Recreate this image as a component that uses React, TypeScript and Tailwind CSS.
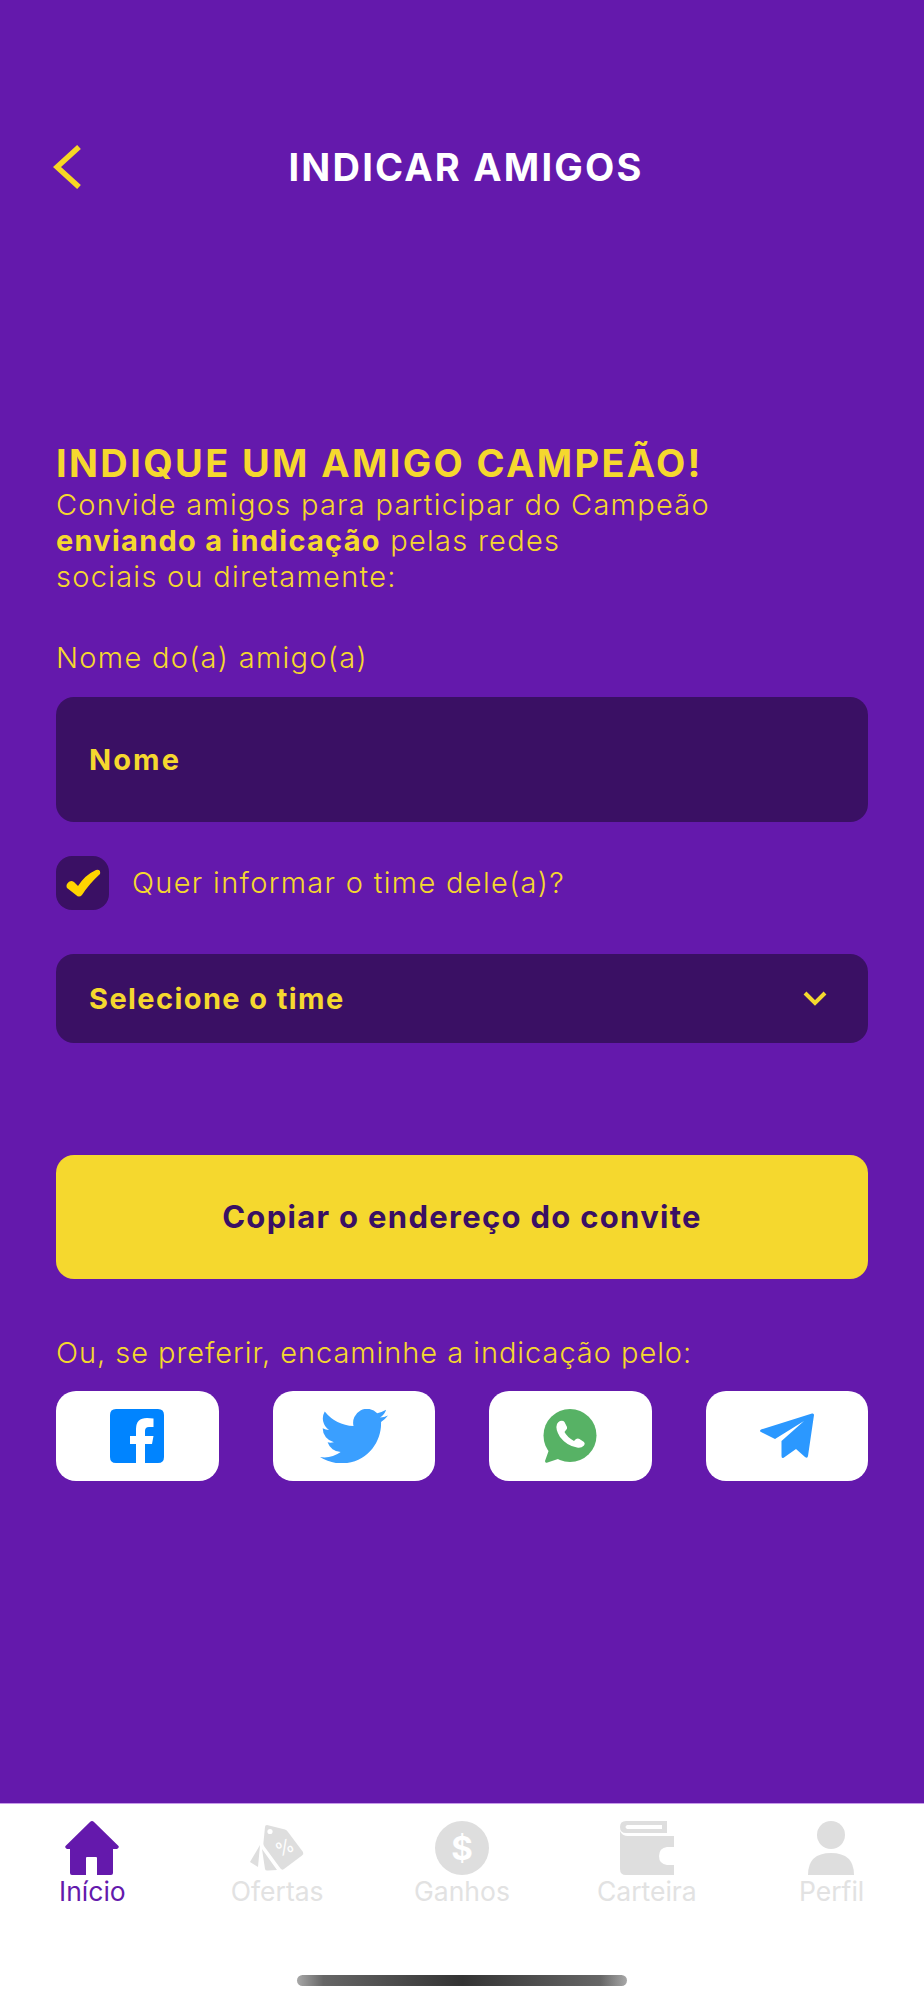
import React from "react";

function Home({ color }: { color: string }) {
  return (
    <svg width="54" height="54" viewBox="0 0 54 54" fill={color}>
      <path d="M27 0 Q28 0 29 1 L53.5 25 Q54.5 27 52 28 L48 28 L48 52 Q48 54 46 54 L32 54 L32 37 Q32 36 31 36 L22 36 Q21 36 21 37 L21 54 L7 54 Q5 54 5 52 L5 28 L2 28 Q-.5 27 .5 25 L25 1 Q26 0 27 0 Z" />
    </svg>
  );
}

function Tag() {
  return (
    <svg width="54" height="54" viewBox="0 0 54 54" fill="#dedede">
      <path d="M17 4 L35 8.5 Q37 9 38 11 L53 31 Q54 33 52 34.5 L34 48 Q32 49.5 30.5 47.5 L14 25 Q13 23 13.5 21 L15 6 Q15 4 17 4 Z" />
      <path d="M10 24 L0 41 L8 46 Z" />
      <path d="M12 28 L15 48 Q15.5 50 18 49.5 L27 49 Z" />
      <circle cx="20" cy="10.5" r="2.6" fill="#fff" />
      <text x="35" y="33" fontSize="19" fill="#fff" textAnchor="middle" transform="rotate(-25 35 27)" fontFamily="Inter, sans-serif">%</text>
    </svg>
  );
}

function Coin() {
  return (
    <svg width="54" height="54" viewBox="0 0 54 54">
      <circle cx="27" cy="27" r="27" fill="#dedede" />
      <text x="27" y="39" fontSize="33" fontWeight="700" fill="#fff" textAnchor="middle" fontFamily="Inter, sans-serif">$</text>
    </svg>
  );
}

function Wallet() {
  return (
    <svg width="54" height="54" viewBox="0 0 54 54" fill="#dedede">
      <path fillRule="evenodd" d="M6 0 L47 0 L47 12 L6 12 Q0 12 0 6 Q0 0 6 0 Z M7 4 Q4 6 7 8 L42 8 L42 4 Z" />
      <path d="M0 10 Q2 15 8 15 L54 15 L54 26 L47 26 Q39 27 39 35 Q39 43 47 44 L54 44 L54 54 L6 54 Q0 54 0 48 Z" />
    </svg>
  );
}

function Person() {
  return (
    <svg width="54" height="54" viewBox="0 0 54 54" fill="#dedede">
      <circle cx="26" cy="14" r="14" />
      <path d="M3 54 Q3 32 26 32 Q49 32 49 54 Z" />
    </svg>
  );
}

function Facebook() {
  return (
    <svg width="54" height="54" viewBox="0 0 54 54">
      <path fill="#0084ff" d="M6 0 H48 Q54 0 54 6 V48 Q54 54 48 54 H35 V35 H42 L43.5 27 H35 V22 Q35 18 39 18 H43.5 V9.5 Q40 9 37 9 Q26 9 26 20 V27 H20 V35 H26 V54 H6 Q0 54 0 48 V6 Q0 0 6 0 Z" />
    </svg>
  );
}

function Twitter() {
  return (
    <svg width="68" height="54" viewBox="0 0 24 19.06" preserveAspectRatio="none">
      <path fill="#3a9fff" d="M24 2.26a9.8 9.8 0 0 1-2.83.78A4.93 4.93 0 0 0 23.34.3a9.86 9.86 0 0 1-3.13 1.19A4.92 4.92 0 0 0 11.83 6 13.98 13.98 0 0 1 1.67.86a4.93 4.93 0 0 0 1.52 6.57 4.9 4.9 0 0 1-2.23-.62v.06a4.93 4.93 0 0 0 3.95 4.83 4.93 4.93 0 0 1-2.22.08 4.93 4.93 0 0 0 4.6 3.42A9.87 9.87 0 0 1 0 16.98a13.94 13.94 0 0 0 7.55 2.21c9.05 0 14-7.5 14-14v-.64A10 10 0 0 0 24 2.26z" />
    </svg>
  );
}

function Whatsapp() {
  return (
    <svg width="54" height="54" viewBox="0 0 54 54">
      <circle cx="27" cy="26.5" r="26.5" fill="#57b265" />
      <path fill="#57b265" d="M7 38 L2 52 Q2 54.5 4.5 53.5 L18 49 Z" />
      <path fill="#fff" d="M17 12 Q20 11 21.5 13 L24 18 Q24.5 20 23 21 L21.5 23 Q24 28 31 32 L33 30 Q35 29 36.5 30 L41 33 Q42.5 34.5 41 36.5 Q38 39.5 34 38.5 Q24 37 17 28 Q12 20 14 15 Q15 13 17 12 Z" />
    </svg>
  );
}

function Plane() {
  return (
    <svg width="54" height="46" viewBox="0 0 54 46">
      <path fill="#2b98ff" d="M52 .5 Q54 0 54 2 L48 43 Q47.5 46 45 44 L36 36 L24 44.5 Q21.5 46 21.5 43 L21.5 28 L44 8 L15 26 L1 19 Q-1 18 1 16.5 Z" />
    </svg>
  );
}

const tabs = [
  { label: "Início", icon: <Home color="#6419ac" />, active: true },
  { label: "Ofertas", icon: <Tag /> },
  { label: "Ganhos", icon: <Coin /> },
  { label: "Carteira", icon: <Wallet /> },
  { label: "Perfil", icon: <Person /> },
];

export default function App() {
  return (
    <div className="flex min-h-[2000px] w-[924px] flex-col bg-[#6419ac] font-['Inter',sans-serif]">
      <main className="flex-1 px-14">
        <header className="relative mt-[142px] flex h-[50px] items-center justify-center">
          <svg className="absolute left-[-3px] top-[3px]" width="29" height="44" viewBox="0 0 29 44" fill="none" stroke="#f7d724" strokeWidth="5.5">
            <path d="M26 2 L4 22 L26 42" />
          </svg>
          <h1 className="pl-2 text-[38px] font-bold leading-[50px] tracking-[2.2px] text-white">INDICAR AMIGOS</h1>
        </header>

        <section className="mt-[247px] text-[#f5d82e]">
          <h2 className="text-[38px] font-bold leading-[48px] tracking-[2.35px]">INDIQUE UM AMIGO CAMPEÃO!</h2>
          <p className="text-[29px] font-light leading-9 tracking-[1.26px]">
            Convide amigos para participar do Campeão
            <br />
            <strong className="font-bold tracking-[1.25px]">enviando a indicação</strong> pelas redes
            <br />
            sociais ou diretamente:
          </p>
        </section>

        <label className="mt-[45px] block text-[29px] font-light leading-9 tracking-[1.3px] text-[#f5d82e]">Nome do(a) amigo(a)</label>
        <div className="mt-[21px] flex h-[125px] items-center rounded-[18px] bg-[#3a1064] px-[33px] text-[29px] font-bold tracking-[2.1px] text-[#f5d82e]">
          Nome
        </div>

        <div className="mt-[34px] flex items-center gap-[23px]">
          <span className="flex h-[54px] w-[53px] items-center justify-center rounded-[16px] bg-[#3a1064]">
            <svg width="36" height="28" viewBox="0 0 36 28" fill="#ffd400">
              <path d="M2 15 Q5 10 9 13 L13 17 Q20 6 31 1 Q36 0 35 5 Q24 15 17 26 Q14 29 11 26 L2 19 Q1 17 2 15 Z" />
            </svg>
          </span>
          <span className="text-[29px] font-light leading-9 tracking-[1.32px] text-[#f5d82e]">Quer informar o time dele(a)?</span>
        </div>

        <div className="mt-11 flex h-[89px] items-center justify-between rounded-[18px] bg-[#3a1064] pl-[33px] pr-[41px] text-[29px] font-bold tracking-[1.4px] text-[#f5d82e]">
          <span>Selecione o time</span>
          <svg width="24" height="15" viewBox="0 0 24 15" fill="none" stroke="#f5d82e" strokeWidth="4">
            <path d="M2 2 L12 12 L22 2" />
          </svg>
        </div>

        <button className="mt-28 flex h-[124px] w-full items-center justify-center rounded-[18px] bg-[#f5d82e] text-[31px] font-bold tracking-[1.3px] text-[#3a1064]">
          Copiar o endereço do convite
        </button>

        <p className="mt-14 text-[29px] font-light leading-9 tracking-[0.95px] text-[#f5d82e]">Ou, se preferir, encaminhe a indicação pelo:</p>

        <div className="mt-5 grid grid-cols-4 gap-[54px]">
          {[<Facebook />, <Twitter />, <Whatsapp />, <Plane />].map((icon, i) => (
            <div key={i} className="flex h-[90px] items-center justify-center rounded-[20px] bg-white">
              {icon}
            </div>
          ))}
        </div>
      </main>

      <footer className="h-[197px] border-t border-[#c79aea] bg-white">
        <nav className="grid grid-cols-5 pt-[17px]">
          {tabs.map((t) => (
            <div key={t.label} className="flex flex-col items-center">
              {t.icon}
              <span className={`text-[26.5px] leading-8 ${t.active ? "text-[#6419ac]" : "text-[#e2e2e2]"}`}>{t.label}</span>
            </div>
          ))}
        </nav>
        <div className="mx-auto mt-[68px] h-[11px] w-[330px] rounded-full bg-[linear-gradient(90deg,#a8a8a8,#666_8%,#333_50%,#666_92%,#a8a8a8)]" />
      </footer>
    </div>
  );
}
